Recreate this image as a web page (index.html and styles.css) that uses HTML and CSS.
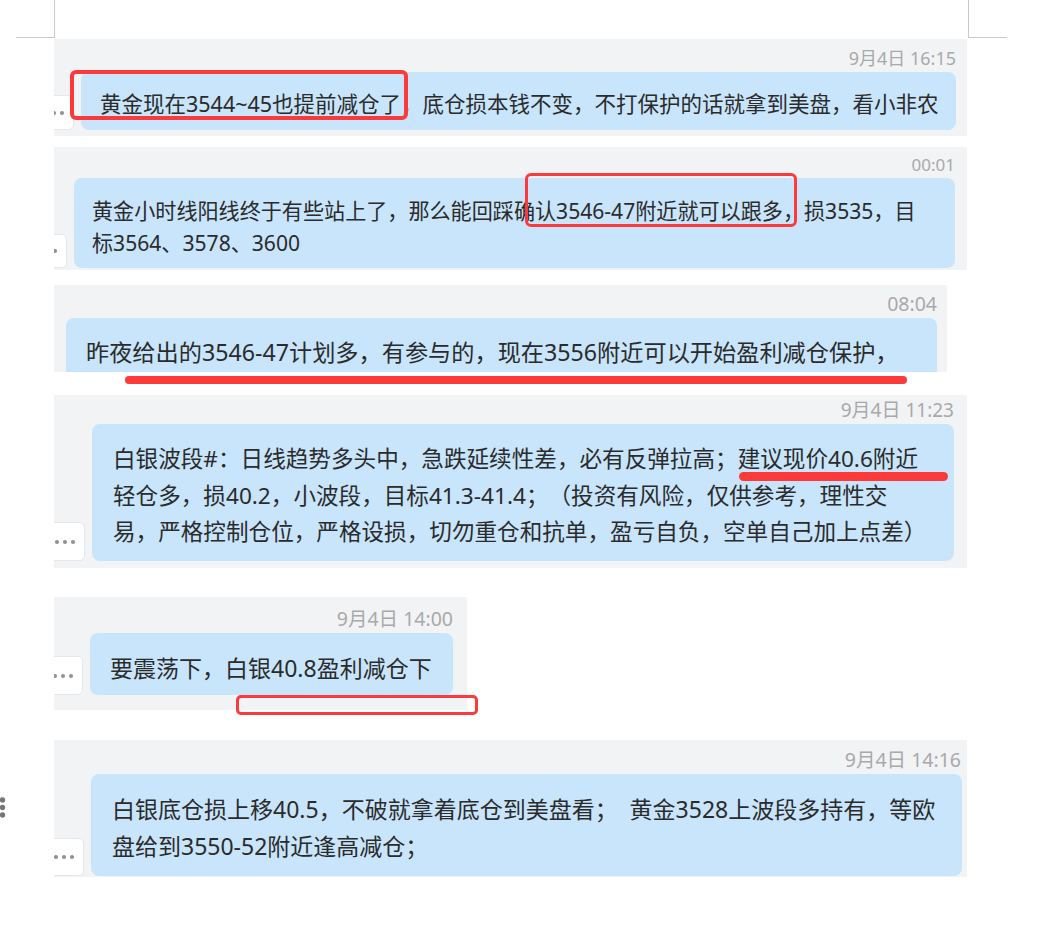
FILE: index.html
```html
<!DOCTYPE html>
<html lang="zh-CN">
<head>
<meta charset="utf-8">
<title>聊天截图</title>
<link rel="stylesheet" href="styles.css">
</head>
<body>
<div class="page">
  <div class="marks">
    <div class="mark mark-l"></div>
    <div class="mark mark-r"></div>
  </div>

  <div class="shot s1">
    <div class="gutter"></div>
    <div class="panel p1">
      <div class="ts">9月4日 16:15</div>
      <div class="row">
        <div class="more"><svg width="22" height="6" viewBox="0 0 22 6"><circle cx="3" cy="3" r="2.1"/><circle cx="11" cy="3" r="2.1"/><circle cx="19" cy="3" r="2.1"/></svg></div>
        <div class="bubble">黄金现在3544~45也提前减仓了，底仓损本钱不变，不打保护的话就拿到美盘，看小非农</div>
      </div>
    </div>
    <div class="mark-box r1"></div>
  </div>

  <div class="shot s2">
    <div class="gutter"></div>
    <div class="panel p2">
      <div class="ts">00:01</div>
      <div class="row">
        <div class="more"><svg width="22" height="6" viewBox="0 0 22 6"><circle cx="3" cy="3" r="2.1"/><circle cx="11" cy="3" r="2.1"/><circle cx="19" cy="3" r="2.1"/></svg></div>
        <div class="bubble">黄金小时线阳线终于有些站上了，那么能回踩确认3546-47附近就可以跟多，损3535，目<br>标3564、3578、3600</div>
      </div>
    </div>
    <div class="mark-box r2"></div>
  </div>

  <div class="shot s3">
    <div class="gutter"></div>
    <div class="panel p3">
      <div class="ts">08:04</div>
      <div class="row">
        <div class="bubble">昨夜给出的3546-47计划多，有参与的，现在3556附近可以开始盈利减仓保护，</div>
      </div>
    </div>
    <div class="mark-line u3"></div>
  </div>

  <div class="shot s4">
    <div class="gutter"></div>
    <div class="panel p4">
      <div class="ts">9月4日 11:23</div>
      <div class="row">
        <div class="more"><svg width="22" height="6" viewBox="0 0 22 6"><circle cx="3" cy="3" r="2.1"/><circle cx="11" cy="3" r="2.1"/><circle cx="19" cy="3" r="2.1"/></svg></div>
        <div class="bubble">白银波段#：日线趋势多头中，急跌延续性差，必有反弹拉高；建议现价40.6附近<br>轻仓多，损40.2，小波段，目标41.3-41.4；（投资有风险，仅供参考，理性交<br>易，严格控制仓位，严格设损，切勿重仓和抗单，盈亏自负，空单自己加上点差）</div>
      </div>
    </div>
    <div class="mark-line u4"></div>
  </div>

  <div class="shot s5">
    <div class="gutter"></div>
    <div class="panel p5">
      <div class="ts">9月4日 14:00</div>
      <div class="row">
        <div class="more"><svg width="22" height="6" viewBox="0 0 22 6"><circle cx="3" cy="3" r="2.1"/><circle cx="11" cy="3" r="2.1"/><circle cx="19" cy="3" r="2.1"/></svg></div>
        <div class="bubble">要震荡下，白银40.8盈利减仓下</div>
      </div>
    </div>
    <div class="mark-box r5"></div>
  </div>

  <div class="shot s6">
    <div class="gutter">
      <svg class="kebab" width="8" height="22" viewBox="0 0 8 22"><circle cx="2.5" cy="3" r="2.7"/><circle cx="2.5" cy="10.5" r="2.7"/><circle cx="2.5" cy="18" r="2.7"/></svg>
    </div>
    <div class="panel p6">
      <div class="ts">9月4日 14:16</div>
      <div class="row">
        <div class="more"><svg width="22" height="6" viewBox="0 0 22 6"><circle cx="3" cy="3" r="2.1"/><circle cx="11" cy="3" r="2.1"/><circle cx="19" cy="3" r="2.1"/></svg></div>
        <div class="bubble">白银底仓损上移40.5，不破就拿着底仓到美盘看；&nbsp; 黄金3528上波段多持有，等欧<br>盘给到3550-52附近逢高减仓；</div>
      </div>
    </div>
  </div>
</div>
</body>
</html>
```

FILE: styles.css
```css
html, body {
  margin: 0;
  padding: 0;
  background: #ffffff;
}

body {
  font-family: "Noto Sans", "Noto Sans CJK SC", sans-serif;
  color: #2b2b2b;
  text-spacing-trim: space-all;
}

.page {
  width: 1038px;
  display: flex;
  flex-direction: column;
}

/* crop marks at top */
.marks {
  display: flex;
  height: 39px;
}

.mark {
  box-sizing: border-box;
  width: 39px;
  height: 38px;
  border-bottom: 1px solid #c9c9c9;
}

.mark-l {
  margin-left: 16px;
  border-right: 1px solid #c9c9c9;
}

.mark-r {
  margin-left: 913px;
  border-left: 1px solid #c9c9c9;
}

/* screenshot strips */
.shot {
  position: relative;
  display: flex;
}

.gutter {
  width: 54px;
  flex: none;
}

.panel {
  box-sizing: border-box;
  background: #f2f3f5;
  overflow: hidden;
  display: flex;
  flex-direction: column;
  flex: none;
}

.ts {
  text-align: right;
  color: #a9a9a9;
  white-space: nowrap;
  margin-bottom: 3px;
}

.row {
  display: flex;
  align-items: flex-end;
  gap: 7px;
}

.more {
  box-sizing: border-box;
  width: 40px;
  flex: none;
  background: #ffffff;
  border: 1px solid #e6e7e9;
  border-radius: 5px;
  display: flex;
  align-items: center;
  justify-content: center;
}

.more svg {
  fill: #929292;
  display: block;
}

.bubble {
  box-sizing: border-box;
  flex: none;
  background: #c8e5fb;
  border-radius: 8px;
  white-space: nowrap;
  padding-left: 20px;
}

/* panel 1 */
.p1 { width: 913px; height: 97px; padding: 8px 11px 0 0; }
.p1 .ts { font-size: 18px; line-height: 22px; }
.p1 .more { margin-left: -20px; height: 35px; }
.p1 .bubble { width: 875px; font-size: 21.5px; line-height: 28px; padding-top: 18px; padding-bottom: 12px; padding-left: 19px; }

/* panel 2 */
.s2 { margin-top: 11px; }
.p2 { width: 913px; height: 123px; padding: 8px 12px 0 0; }
.p2 .ts { font-size: 17px; line-height: 20px; }
.p2 .more { margin-left: -27px; height: 34px; }
.p2 .bubble { width: 881px; font-size: 21.1px; line-height: 32px; padding-top: 17px; padding-bottom: 9px; padding-left: 18px; }

/* panel 3 */
.s3 { margin-top: 15px; }
.p3 { width: 893px; height: 87px; padding: 8px 10px 0 0; }
.p3 .ts { font-size: 19.5px; line-height: 22px; }
.p3 .bubble { margin-left: 12px; width: 871px; font-size: 23.2px; line-height: 36px; padding-top: 16px; padding-bottom: 10px; }

/* panel 4 */
.s4 { margin-top: 23px; }
.p4 { width: 913px; height: 173px; padding: 4px 13px 0 0; }
.p4 .ts { font-size: 19px; line-height: 22px; }
.p4 .more { margin-left: -9px; height: 39px; }
.p4 .bubble { width: 862px; font-size: 22.6px; line-height: 36.5px; padding-top: 17px; padding-bottom: 10.5px; padding-left: 21px; }

/* panel 5 */
.s5 { margin-top: 29px; }
.p5 { width: 413px; height: 113px; padding: 11px 14px 0 0; }
.p5 .ts { font-size: 19.5px; line-height: 22px; }
.p5 .more { margin-left: -11px; height: 39px; }
.p5 .bubble { width: 363px; font-size: 23px; line-height: 34px; padding-top: 18px; padding-bottom: 10px; }

/* panel 6 */
.s6 { margin-top: 30px; }
.p6 { width: 913px; height: 137px; padding: 9px 6px 0 0; }
.p6 .ts { font-size: 19.5px; line-height: 22px; }
.p6 .more { margin-left: -10px; height: 38px; }
.p6 .bubble { width: 871px; font-size: 23px; line-height: 37px; padding-top: 17px; padding-bottom: 11px; padding-left: 21px; }

.kebab {
  display: block;
  margin-top: 57px;
  fill: #777777;
}

/* red annotations drawn over the screenshots */
.mark-box {
  position: absolute;
  box-sizing: border-box;
  border: 4px solid #fc3a3b;
  border-radius: 6px;
}

.mark-line {
  position: absolute;
  background: #fc3a3b;
  border-radius: 5px;
}

.r1 { left: 70px; top: 31px; width: 338px; height: 50px; }
.r2 { left: 525px; top: 26px; width: 272px; height: 54px; border-width: 3.5px; }
.u3 { left: 125px; top: 91px; width: 782px; height: 8px; }
.u4 { left: 739px; top: 77px; width: 209px; height: 9px; }
.r5 { left: 236px; top: 98px; width: 242px; height: 20px; border-width: 3.5px; border-radius: 5px; }
```
